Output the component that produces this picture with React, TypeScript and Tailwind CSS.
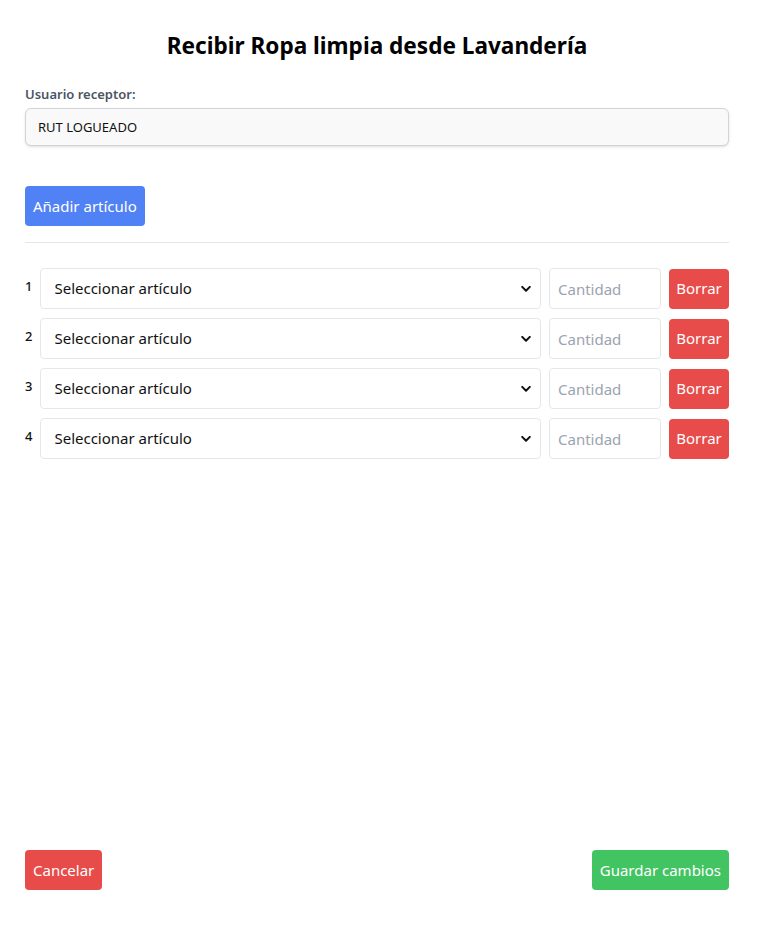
import { useState } from 'react'

interface Fila {
  id: number
}

function Chevron() {
  return (
    <svg
      className="pointer-events-none absolute right-[10px] top-1/2 -translate-y-1/2"
      width="10"
      height="7"
      viewBox="0 0 10 7"
      fill="none"
    >
      <path d="M1.2 1.4 5 5.2 8.8 1.4" stroke="#111" strokeWidth="2" strokeLinecap="round" strokeLinejoin="round" />
    </svg>
  )
}

export default function App() {
  const [filas, setFilas] = useState<Fila[]>([{ id: 1 }, { id: 2 }, { id: 3 }, { id: 4 }])

  const agregar = () => setFilas([...filas, { id: filas.length + 1 }])
  const borrar = (id: number) => setFilas(filas.filter((f) => f.id !== id))

  return (
    <div className="min-h-screen flex flex-col bg-white pl-[25px] pr-[28px] pt-[30px] pb-[46px] text-[#111] font-['Noto_Sans',sans-serif]">
      <h1 className="text-center text-[22.6px] leading-8 font-bold text-black">
        Recibir Ropa limpia desde Lavandería
      </h1>

      <label className="mt-[22px] block text-[13px] leading-5 font-semibold text-[#4b5563]">
        Usuario receptor:
      </label>
      <input
        type="text"
        readOnly
        value="RUT LOGUEADO"
        className="mt-1 h-[38px] w-full rounded-md border border-[#d1d5db] bg-[#f9f9f9] px-3 text-[13px] text-[#111] shadow-sm outline-none"
      />

      <div className="mt-10">
        <button
          onClick={agregar}
          className="h-10 rounded bg-[#5082f5] px-2 text-[15px] text-white"
        >
          Añadir artículo
        </button>
      </div>

      <hr className="mt-4 border-t border-[#e5e7eb]" />

      <div className="mt-[25px] flex flex-col gap-[9px]">
        {filas.map((fila, i) => (
          <div key={fila.id} className="flex items-center gap-2">
            <span className="-mt-1 text-[13px] font-medium text-[#111]">{i + 1}</span>
            <div className="relative flex-1">
              <select className="h-[41px] w-full appearance-none rounded border border-[#e5e7eb] bg-white pl-[13px] pr-8 text-[15px] text-[#111] outline-none">
                <option>Seleccionar artículo</option>
              </select>
              <Chevron />
            </div>
            <input
              type="text"
              placeholder="Cantidad"
              className="h-[41px] w-[112px] rounded border border-[#e5e7eb] bg-white px-2 text-[15px] outline-none placeholder:text-[#9ca3af]"
            />
            <button
              onClick={() => borrar(fila.id)}
              className="h-10 w-[60px] rounded bg-[#e74c4a] text-[15px] text-white"
            >
              Borrar
            </button>
          </div>
        ))}
      </div>

      <div className="mt-auto flex items-center justify-between">
        <button className="h-10 rounded bg-[#e74c4a] px-2 text-[15px] text-white">Cancelar</button>
        <button className="h-10 rounded bg-[#42c463] px-2 text-[15px] text-white">Guardar cambios</button>
      </div>
    </div>
  )
}
